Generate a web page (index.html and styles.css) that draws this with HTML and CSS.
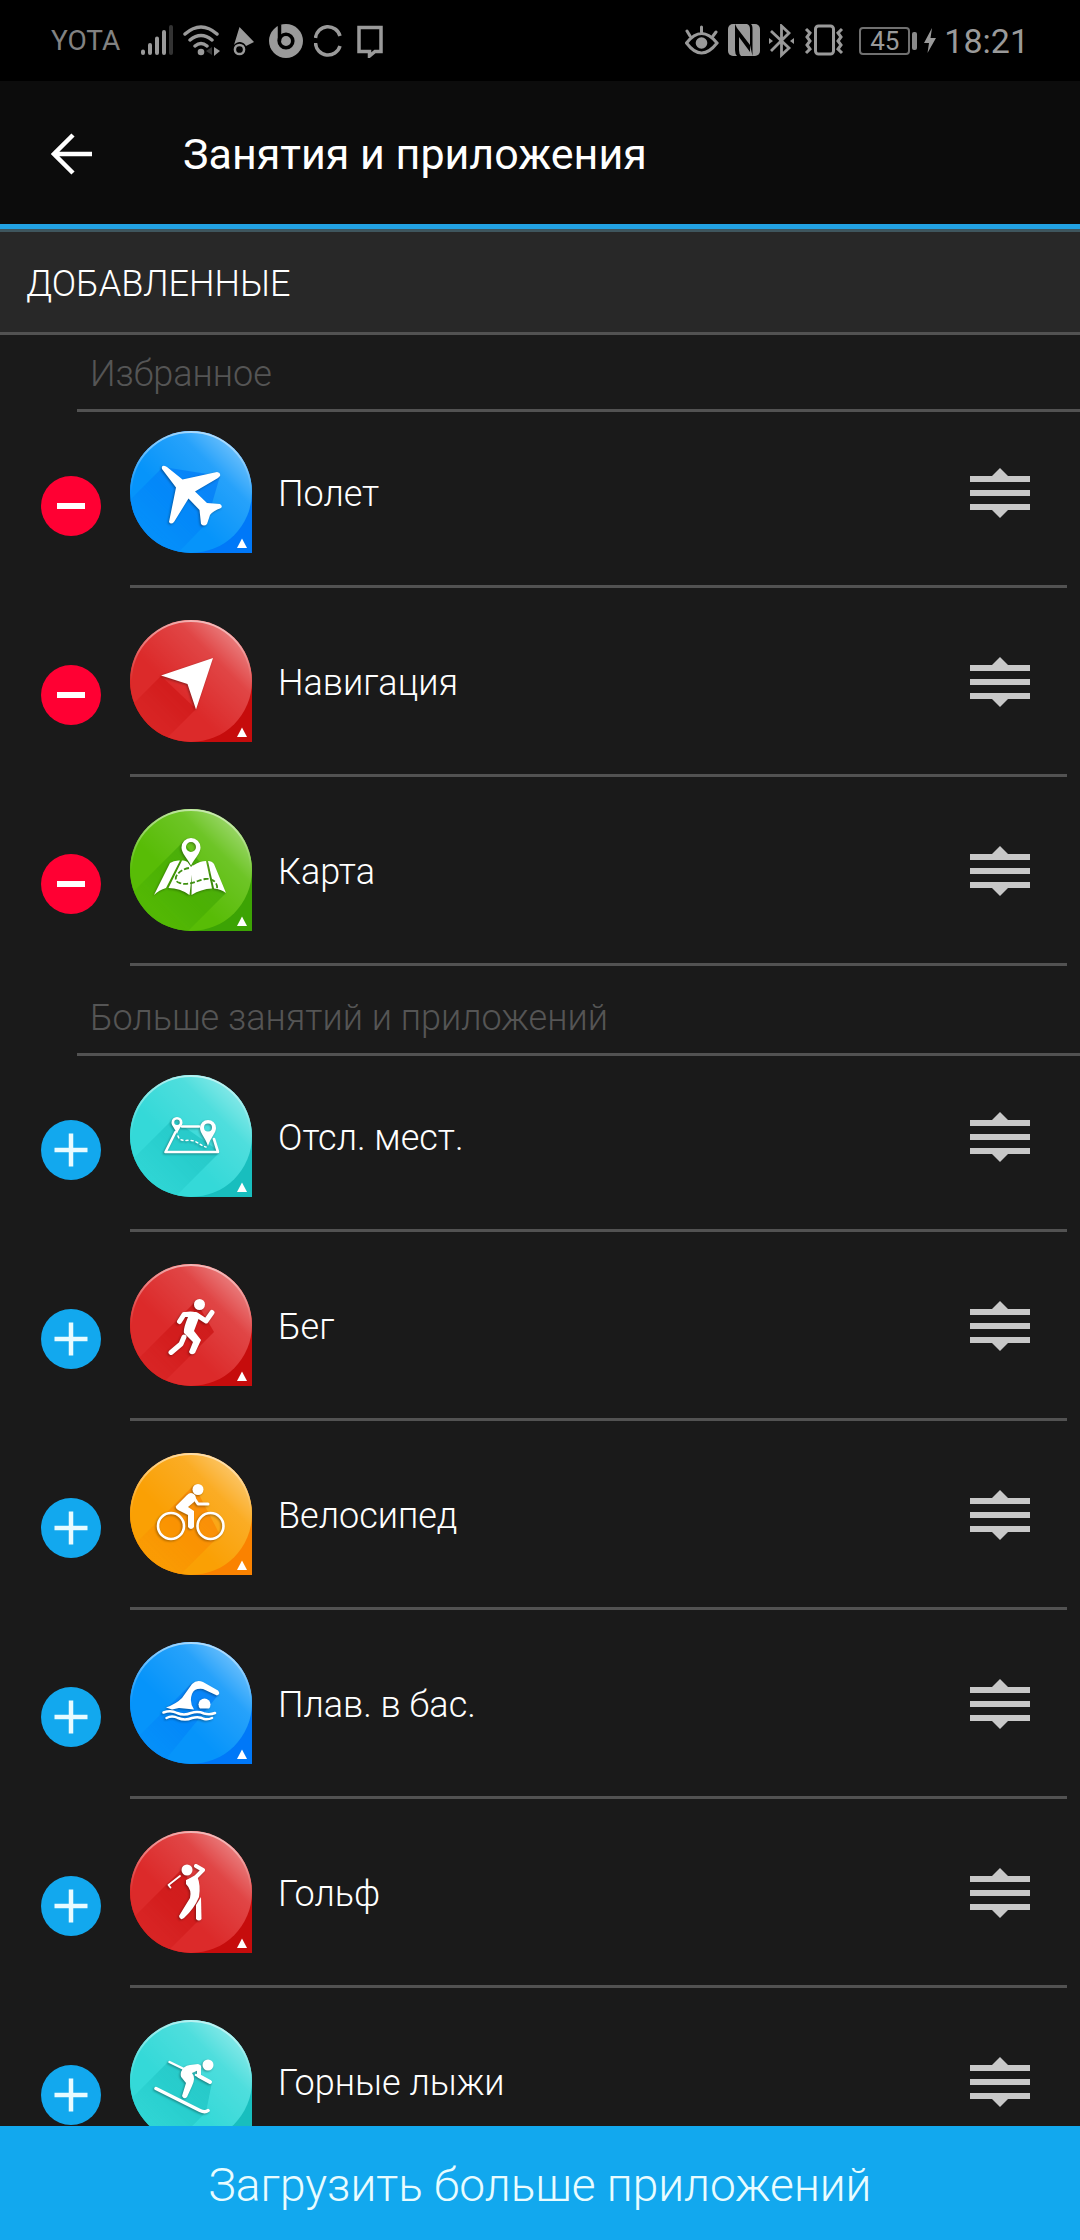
FILE: index.html
```html
<!DOCTYPE html>
<html lang="ru">
<head>
<meta charset="utf-8">
<meta name="viewport" content="width=device-width, initial-scale=1">
<title>Занятия и приложения</title>
<link rel="stylesheet" href="styles.css">
</head>
<body>
<svg class="sprite" aria-hidden="true">
  <defs>
    <linearGradient id="shine" x1="0.3" y1="0.7" x2="0.9" y2="0.1">
      <stop offset="0.15" stop-color="#fff" stop-opacity="0"/>
      <stop offset="0.65" stop-color="#fff" stop-opacity="0.13"/>
      <stop offset="1" stop-color="#fff" stop-opacity="0.45"/>
    </linearGradient>
    <linearGradient id="rim" x1="0" y1="0" x2="0" y2="1">
      <stop offset="0" stop-color="#fff" stop-opacity="0.55"/>
      <stop offset="0.5" stop-color="#fff" stop-opacity="0"/>
    </linearGradient>
    <linearGradient id="fade" gradientUnits="userSpaceOnUse" x1="70" y1="52" x2="22" y2="100">
      <stop offset="0" stop-color="#fff"/>
      <stop offset="1" stop-color="#fff" stop-opacity="0.25"/>
    </linearGradient>
    <mask id="fade-mask"><rect width="122" height="122" fill="url(#fade)"/></mask>
    <clipPath id="disc"><circle cx="61" cy="61" r="61"/></clipPath>
    <symbol id="badge" viewBox="0 0 122 122">
      <path class="badge-corner" d="M61 0A61 61 0 0 0 61 122H122V61A61 61 0 0 0 61 0Z"/>
      <circle class="badge-disc" cx="61" cy="61" r="61"/>
      <circle cx="61" cy="61" r="61" fill="url(#shine)"/>
      <circle cx="61" cy="61" r="60" fill="none" stroke="url(#rim)" stroke-width="2"/>
      <path d="M112 107.500l5 9.500h-10z" fill="#fff"/>
    </symbol>
    <symbol id="handle" viewBox="0 0 60 50">
      <path d="M0 8H22L30 0L38 8H60V14H0ZM0 22H60V28H0ZM0 36H60V42H38L30 50L22 42H0Z" fill="#c8c8c8"/>
    </symbol>
    <symbol id="minus" viewBox="0 0 60 60">
      <circle cx="30" cy="30" r="30" fill="#ff0033"/><path d="M16 30H44" stroke="#fff" stroke-width="6"/>
    </symbol>
    <symbol id="plus" viewBox="0 0 60 60">
      <circle cx="30" cy="30" r="30" fill="#12a8ee"/><path d="M13.500 30H46.500M30 13.500V46.500" stroke="#e8fbff" stroke-width="4.500"/>
    </symbol>
  </defs>
</svg>

<div class="app">
  <div class="status">
    <div class="status-group">
      <span class="carrier">YOTA</span>
      <svg class="st-signal" width="34" height="34" viewBox="141 24 34 34"><g stroke-width="4" stroke-linecap="round"><path d="M144 51.500V53M151 45V53M158 38.500V53M165 32V53" stroke="#9a9a9a"/><path d="M172 27V53" stroke="#333"/></g></svg>
      <svg class="st-wifi" width="38" height="34" viewBox="184 24 38 34"><g fill="none" stroke="#9a9a9a" stroke-width="3.500" stroke-linecap="round"><path d="M186 34Q202 20 218 34M191 40Q202 31 213 40M196 46Q202 41 208 46"/></g><circle cx="202" cy="52" r="3.300" fill="#9a9a9a"/><path d="M215 47l6 4-6 5z" fill="#9a9a9a"/><path d="M213 47v8l-6-4z" fill="#333"/></svg>
      <svg class="st-arrow" width="22" height="34" viewBox="234 24 22 34"><path d="M240.500 27L255 42L247 46A7 7 0 0 0 235 45Z" fill="#9a9a9a"/><circle cx="240.500" cy="49.500" r="4.600" fill="none" stroke="#9a9a9a" stroke-width="2.500"/></svg>
      <svg class="st-beats" width="34" height="34" viewBox="270 24 34 34"><circle cx="287" cy="41" r="17" fill="#9a9a9a"/><path d="M280.500 25V41" stroke="#000" stroke-width="3.500"/><circle cx="287" cy="41" r="6.800" fill="none" stroke="#000" stroke-width="3.600"/></svg>
      <svg class="st-ring" width="29" height="34" viewBox="315 24 29 34"><g fill="none" stroke="#9a9a9a" stroke-width="3.500"><path d="M316.500 38A12.500 12.500 0 0 1 341 36M316.500 43A12.500 12.500 0 0 0 341 46"/></g></svg>
      <svg width="26" height="34" viewBox="358 24 26 34"><path d="M360 27.500H382V51.500H376L370.500 56V51.500H360Z" fill="none" stroke="#9a9a9a" stroke-width="3.500"/></svg>
    </div>
    <div class="status-group">
      <svg class="st-eye" width="34" height="34" viewBox="687 24 34 34"><g fill="none" stroke="#9a9a9a" stroke-width="3" stroke-linecap="round"><path d="M688.500 43Q703.500 24 719 43Q703.500 63 688.500 43ZM703.500 27V32M689 31L692 36M718 32L715 36"/></g><circle cx="703.500" cy="43" r="5.800" fill="#9a9a9a"/></svg>
      <svg class="st-nfc" width="32" height="34" viewBox="731 24 32 34"><rect x="731" y="24" width="32" height="32" rx="5" fill="#9a9a9a"/><path d="M738 24L740 28L753 45V52L742 37V50Q742 54 744 56H740Q738 54 738 50ZM750 24Q753 25 753 29V45L755.500 56V29Q755.500 25 754 24Z" fill="#000"/></svg>
      <svg class="st-bt" width="26" height="34" viewBox="772 24 26 34"><path d="M774 31L792 48L784.500 55V26L792 33L774 51" fill="none" stroke="#9a9a9a" stroke-width="2.800"/><path d="M772 38l4 3-4 3zM797 38l-4 3 4 3z" fill="#9a9a9a"/></svg>
      <svg class="st-vibrate" width="40" height="34" viewBox="806 24 40 34"><g fill="none" stroke="#9a9a9a" stroke-width="3"><rect x="817.500" y="26" width="18" height="28" rx="3"/><path d="M808 29l4 4-3 4 3 4-3 4 3 4-4 4M844 29l-4 4 3 4-3 4 3 4-3 4 4 4"/></g></svg>
      <span class="battery">45</span>
      <svg class="st-bolt" width="12" height="34" viewBox="926 24 12 34"><path d="M934 28L926 43H931L929.500 53L938 38H932.500Z" fill="#9a9a9a"/></svg>
      <time class="clock">18:21</time>
    </div>
  </div>

  <header class="bar">
    <button class="back" type="button" aria-label="Назад"><svg width="42" height="42" viewBox="0 0 42 42"><path d="M41 21H4M22 2L3 21L22 40" fill="none" stroke="#fff" stroke-width="4.500"/></svg></button>
    <h1 class="title">Занятия и приложения</h1>
  </header>

  <main class="content">
    <h2 class="section">ДОБАВЛЕННЫЕ</h2>

    <h3 class="group">Избранное</h3>
    <ul class="list">
      <li class="row">
        <button class="toggle" type="button" aria-label="Удалить"><svg width="60" height="60"><use href="#minus"/></svg></button>
        <div class="item">
          <svg class="badge blue" viewBox="0 0 122 122"><use href="#badge"/><g clip-path="url(#disc)"><path class="cast" mask="url(#fade-mask)" d="M33 36L-27 96L20 150L76 93L90 45Z"/></g>
            <path class="glyph" d="M32 38Q31 34 35 35L37 36L52.500 48.500L87 41Q91 42 90 45L88 47L65 60.500L77 72L90 73Q93 75 91 77Q83 80 80 84L77 93Q74 96 71 93L69.500 79L58.500 67.500L44 91Q41 94 39 91L46 56.500Z"/></svg>
          <span class="name">Полет</span>
          <button class="drag" type="button" aria-label="Переместить"><svg width="60" height="50"><use href="#handle"/></svg></button>
        </div>
      </li>
      <li class="row">
        <button class="toggle" type="button" aria-label="Удалить"><svg width="60" height="60"><use href="#minus"/></svg></button>
        <div class="item">
          <svg class="badge red" viewBox="0 0 122 122"><use href="#badge"/><g clip-path="url(#disc)"><path class="cast" mask="url(#fade-mask)" d="M31 56L-29 116L6 149L66 89Z"/></g>
            <path class="glyph" d="M83 38L31 55.500L57.500 64L66 89.500Z"/></svg>
          <span class="name">Навигация</span>
          <button class="drag" type="button" aria-label="Переместить"><svg width="60" height="50"><use href="#handle"/></svg></button>
        </div>
      </li>
      <li class="row">
        <button class="toggle" type="button" aria-label="Удалить"><svg width="60" height="60"><use href="#minus"/></svg></button>
        <div class="item">
          <svg class="badge green" viewBox="0 0 122 122"><use href="#badge"/><g clip-path="url(#disc)"><path class="cast" mask="url(#fade-mask)" d="M53 33L-40 126L38 142L96 84Z"/></g>
            <g class="glyph"><path d="M40 54Q44 51 50 51.500L36 79Q29 81 24 86ZM52 51.500Q55 51 57.500 53L61 58L63 56L59.500 86Q50 79 38.500 79ZM64 56Q70 52 76 52L82 79.500Q71 80 61.500 86L62 57ZM78 52Q82 52 84 55L96 84Q91 80 84 79.500Z"/><path fill-rule="evenodd" d="M61 29A9.500 9.500 0 0 1 70.500 38.500C70.500 44 65 49 61 56.500C57 49 51.500 44 51.500 38.500A9.500 9.500 0 0 1 61 29ZM61 33A5 5 0 1 0 61 43A5 5 0 1 0 61 33Z"/></g>
            <path d="M59 59C47 61 41 72 50 74C58 77 66 72 75 70C82 69 88 73 87 80" fill="none" stroke="#3f9010" stroke-width="1.800" stroke-dasharray="5 2"/></svg>
          <span class="name">Карта</span>
          <button class="drag" type="button" aria-label="Переместить"><svg width="60" height="50"><use href="#handle"/></svg></button>
        </div>
      </li>
    </ul>

    <h3 class="group more">Больше занятий и приложений</h3>
    <ul class="list">
      <li class="row">
        <button class="toggle" type="button" aria-label="Добавить"><svg width="60" height="60"><use href="#plus"/></svg></button>
        <div class="item">
          <svg class="badge cyan" viewBox="0 0 122 122"><use href="#badge"/><g clip-path="url(#disc)"><path class="cast" mask="url(#fade-mask)" d="M43 44L-40 127L38 129L90 77Z"/></g>
            <g class="glyph"><path class="line" stroke-width="2.600" d="M52 51.500H69M45.500 57L35.500 77H88L84 64"/><path class="line" stroke-width="1.500" stroke-dasharray="2 3" d="M48 61C50 68 58 64 64 66C69 68 72 71 76 72"/><path fill-rule="evenodd" d="M47 42A5.500 5.500 0 0 1 52.500 47.500C52.500 51 49 53 47 59C45 53 41.500 51 41.500 47.500A5.500 5.500 0 0 1 47 42ZM47 44.500A2.700 2.700 0 1 0 47 50A2.700 2.700 0 1 0 47 44.500ZM78 45A8 8 0 0 1 86 53C86 58 81 62 78 71C75 62 70 58 70 53A8 8 0 0 1 78 45ZM78 48.500A4 4 0 1 0 78 56.500A4 4 0 1 0 78 48.500Z"/></g></svg>
          <span class="name">Отсл. мест.</span>
          <button class="drag" type="button" aria-label="Переместить"><svg width="60" height="50"><use href="#handle"/></svg></button>
        </div>
      </li>
      <li class="row">
        <button class="toggle" type="button" aria-label="Добавить"><svg width="60" height="60"><use href="#plus"/></svg></button>
        <div class="item">
          <svg class="badge red" viewBox="0 0 122 122"><use href="#badge"/><g clip-path="url(#disc)"><path class="cast" mask="url(#fade-mask)" d="M66 37L-30 133L4 148L84 68Z"/></g>
            <g class="glyph"><circle cx="69.500" cy="40.500" r="5.500"/><path class="line" stroke-width="5" d="M49.500 57.500L54 50.500H66L76 57L82 48.500"/><path d="M55 48Q65 46 70 51L64 67L71 76L65 89Q61 92 59 88L63 78L54 69Q53 65 58 53Z"/><path class="line" stroke-width="5" d="M54 73L51 80L41 88.500"/></g></svg>
          <span class="name">Бег</span>
          <button class="drag" type="button" aria-label="Переместить"><svg width="60" height="50"><use href="#handle"/></svg></button>
        </div>
      </li>
      <li class="row">
        <button class="toggle" type="button" aria-label="Добавить"><svg width="60" height="60"><use href="#plus"/></svg></button>
        <div class="item">
          <svg class="badge orange" viewBox="0 0 122 122"><use href="#badge"/><g clip-path="url(#disc)"><path class="cast" mask="url(#fade-mask)" d="M64 32L-40 136L25 147L90 82Z"/></g>
            <g class="glyph"><circle cx="68" cy="36.500" r="5.500"/><path class="line" stroke-width="3" d="M64 45L68 51H78"/><path d="M46 53L57 42Q61 38 65 42Q67 46 64 49L58 54L64 58V74Q61 78 58 74V62L48 57Q45 55 46 53Z"/><circle class="line" cx="41" cy="73" r="13" stroke-width="2.600"/><circle class="line" cx="80.500" cy="73" r="13" stroke-width="2.600"/></g></svg>
          <span class="name">Велосипед</span>
          <button class="drag" type="button" aria-label="Переместить"><svg width="60" height="50"><use href="#handle"/></svg></button>
        </div>
      </li>
      <li class="row">
        <button class="toggle" type="button" aria-label="Добавить"><svg width="60" height="60"><use href="#plus"/></svg></button>
        <div class="item">
          <svg class="badge blue" viewBox="0 0 122 122"><use href="#badge"/><g clip-path="url(#disc)"><path class="cast" mask="url(#fade-mask)" d="M62 41L-30 133L5 155L89 52Z"/></g>
            <g class="glyph"><path d="M36 65.500Q46 62 52 56L62 42Q67 37 73 40L88 48.500Q91 52 87 53.500L73 47Q64 46 62 52Q59 60 64 67.500L49 66L42 67.500Z"/><path d="M70 66.500A6 6 0 1 1 79 66.500Z"/><path class="line" stroke-width="2.500" d="M33.500 70.500Q41 68 47 71Q54 74 61 71Q68 69 74 71.500Q80 73 85 71M36.500 76Q42 73 48 76Q55 79 62 76Q69 74 74 77Q78 78 82 76"/></g></svg>
          <span class="name">Плав. в бас.</span>
          <button class="drag" type="button" aria-label="Переместить"><svg width="60" height="50"><use href="#handle"/></svg></button>
        </div>
      </li>
      <li class="row">
        <button class="toggle" type="button" aria-label="Добавить"><svg width="60" height="60"><use href="#plus"/></svg></button>
        <div class="item">
          <svg class="badge red" viewBox="0 0 122 122"><use href="#badge"/><g clip-path="url(#disc)"><path class="cast" mask="url(#fade-mask)" d="M54 36L-40 130L10 148L70 88Z"/></g>
            <g class="glyph"><circle cx="57" cy="39" r="5.500"/><path class="line" stroke-width="1.800" d="M50 45L38.500 54L40.500 56.500"/><path class="line" stroke-width="4" d="M66 35L73 39L66 46L59 50"/><path d="M56 49L67 45Q71 54 69 66Q64 78 54 87Q50 90 49 85Q55 75 60 67Q62 59 56 53Z"/><path d="M71 66L71.500 88Q69 91 66 88V74Z"/></g></svg>
          <span class="name">Гольф</span>
          <button class="drag" type="button" aria-label="Переместить"><svg width="60" height="50"><use href="#handle"/></svg></button>
        </div>
      </li>
      <li class="row">
        <button class="toggle" type="button" aria-label="Добавить"><svg width="60" height="60"><use href="#plus"/></svg></button>
        <div class="item">
          <svg class="badge cyan" viewBox="0 0 122 122"><use href="#badge"/><g clip-path="url(#disc)"><path class="cast" mask="url(#fade-mask)" d="M39 41L-40 120L20 149L76 92L82 62Z"/></g>
            <g class="glyph"><circle cx="78" cy="45" r="5.500"/><path class="line" stroke-width="2.500" d="M39.500 42L56 50M66 55L80 62"/><path class="line" stroke-width="4" d="M69 47L69 56L80 62"/><path d="M51 52Q53 46 60 45L68 44Q72 45 71 49L62 53Q66 58 62 66L57 77Q54 80 52 76L56 63L52 58Q50 56 51 52Z"/><path class="line" stroke-width="3.500" d="M26 68.500L70 90.500Q75 93 78 90.500"/></g></svg>
          <span class="name">Горные лыжи</span>
          <button class="drag" type="button" aria-label="Переместить"><svg width="60" height="50"><use href="#handle"/></svg></button>
        </div>
      </li>
    </ul>
  </main>

  <button class="download" type="button">Загрузить больше приложений</button>
</div>
</body>
</html>
```
FILE: styles.css
```css
* { box-sizing: border-box; }

body {
  margin: 0;
  background: #1a1a1a;
  color: #fff;
  font-family: Roboto, "Noto Sans", sans-serif;
  font-weight: 300;
}

h1, h2, h3, ul { margin: 0; padding: 0; }
ul { list-style: none; }
svg { display: block; }
.sprite { position: absolute; width: 0; height: 0; }

button {
  padding: 0;
  border: 0;
  background: none;
  color: inherit;
  font: inherit;
  cursor: pointer;
}

.app {
  display: flex;
  flex-direction: column;
  height: 100vh;
}

/* Status bar */
.status {
  display: flex;
  justify-content: space-between;
  flex: none;
  padding: 24px 51px 23px 51px;
  background: #000;
  color: #9a9a9a;
  font-weight: 400;
}
.status-group { display: flex; align-items: center; height: 34px; }
.carrier { margin-right: 20px; font-size: 28px; line-height: 34px; color: #828282; }
.st-signal { margin-right: 9px; }
.st-wifi { margin-right: 12px; }
.st-arrow { margin-right: 14px; }
.st-beats { margin-right: 11px; }
.st-ring { margin-right: 14px; }
.st-eye, .st-nfc, .st-bt { margin-right: 9px; }
.st-vibrate { margin-right: 15px; }
.st-bolt { margin-right: 8px; }
.battery {
  position: relative;
  width: 51px;
  height: 28px;
  margin-right: 14px;
  border: 2px solid #707070;
  border-radius: 4px;
  font-size: 26px;
  line-height: 25px;
  text-align: center;
}
.battery::after {
  content: "";
  position: absolute;
  top: 3px;
  right: -9px;
  width: 5px;
  height: 18px;
  border-radius: 2px;
  background: #8a8a8a;
}
.clock { font-size: 34px; line-height: 34px; }

/* App bar */
.bar {
  display: flex;
  align-items: center;
  flex: none;
  height: 151px;
  padding: 0 51px 2px;
  border-bottom: 3px solid #3f565e;
  background: #0c0c0c;
  box-shadow: inset 0 -5px #22a2e4;
}
.back { margin-right: 90px; }
.title { font-size: 43px; line-height: 50px; font-weight: 400; }

/* Lists */
.content {
  flex: 1;
  min-height: 0;
  overflow-y: auto;
  scrollbar-width: none;
}
.section {
  padding: 28px 26px 24px;
  border-bottom: 3px solid #525252;
  background: #282828;
  font-size: 36px;
  line-height: 48px;
  font-weight: 300;
}
.group {
  margin-left: 77px;
  padding: 15px 13px 11px;
  border-bottom: 3px solid #525252;
  color: #555;
  font-size: 36px;
  line-height: 48px;
  font-weight: 300;
}
.group.more { padding-top: 28px; }

.row {
  display: flex;
  align-items: center;
  padding: 0 13px 0 41px;
}
.toggle { margin-right: 29px; }
.item {
  display: flex;
  align-items: center;
  flex: 1;
  padding: 32px 37px;
  padding-left: 0;
  border-bottom: 3px solid #525252;
}
.row:first-child .item { padding-top: 19px; }
.row .toggle { padding-top: 24px; }
.row:first-child .toggle { padding-top: 12px; }
.name { flex: 1; padding-top: 4px; font-size: 36px; line-height: 48px; }
.drag { padding-top: 2px; }

.badge { flex: none; width: 122px; height: 122px; margin-right: 26px; }
.badge-disc { fill: var(--disc); }
.badge-corner { fill: var(--corner); }
.cast { fill: var(--corner); opacity: 0.65; }
.glyph { fill: #fff; filter: drop-shadow(-1px 1px 1px rgb(0 0 0 / 0.35)); }
.line { fill: none; stroke: #fff; stroke-linecap: round; stroke-linejoin: round; }
.blue { --disc: #0694fa; --corner: #0078f8; }
.red { --disc: #dc2a2a; --corner: #c60c0c; }
.green { --disc: #58bc06; --corner: #3ca304; }
.cyan { --disc: #34d9d8; --corner: #18bebe; }
.orange { --disc: #faa004; --corner: #fa8200; }

.download {
  flex: none;
  padding: 32px 0 28px;
  background: #12a8ee;
  color: #e8fcff;
  font-size: 46px;
  line-height: 54px;
}
```
